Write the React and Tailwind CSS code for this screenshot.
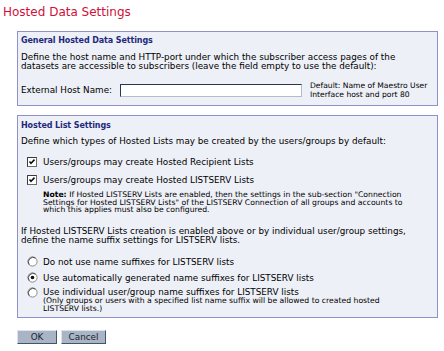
import React from 'react';

const Check = () => (
  <svg width="10" height="10" viewBox="0 0 10 10" className="shrink-0">
    <rect x="0.5" y="0.5" width="9" height="9" fill="#ffffff" stroke="#6b6b6b" />
    <path d="M0.5 9.5V0.5H9.5" fill="none" stroke="#3a3a3a" />
    <path d="M2.5 4.5L4 6.2L7.5 2.6" fill="none" stroke="#111111" strokeWidth="1.6" />
  </svg>
);

const Radio = ({ checked }) => (
  <svg width="11" height="11" viewBox="0 0 11 11" className="shrink-0">
    <circle cx="5.5" cy="5.5" r="4.6" fill="#ffffff" stroke="#8a8a8a" />
    <path d="M2.2 8.6A4.6 4.6 0 0 1 8.6 2.2" fill="none" stroke="#4a4a4a" />
    {checked && <circle cx="5.5" cy="5.5" r="1.8" fill="#111111" />}
  </svg>
);

const Button = ({ children, w }) => (
  <button
    type="button"
    className={`${w} h-[14px] bg-[#a9b5c6] border border-t-[#dde3ec] border-l-[#dde3ec] border-b-[#46546a] border-r-[#46546a] text-[8.8px] leading-[12px] text-[#1a1f2a]`}
  >
    {children}
  </button>
);

export default function App() {
  return (
    <div className="w-[444px] h-[351px] bg-white text-black overflow-hidden" style={{ fontFamily: '"DejaVu Sans", Verdana, sans-serif' }}>
      <h1 className="pl-[3px] pt-[5px] text-[12px] leading-[14px] text-[#d0103a]">Hosted Data Settings</h1>

      {/* General settings */}
      <div className="ml-[17px] mt-[12px] w-[421px] border border-[#9191c9] bg-[#eef0f7] px-[3px] pt-[4px] pb-[6px]">
        <h2 className="text-[8px] leading-[10px] font-bold tracking-[-0.1px] text-[#1f2a7c]">General Hosted Data Settings</h2>
        <p className="mt-[7px] text-[8.8px] leading-[9px]">
          Define the host name and HTTP-port under which the subscriber access pages of the<br />
          datasets are accessible to subscribers (leave the field empty to use the default):
        </p>
        <div className="mt-[10px] flex items-center">
          <span className="w-[99px] text-[8.8px] leading-[9px]">External Host Name:</span>
          <input
            type="text"
            className="w-[182px] h-[13px] bg-white border border-t-[#2a3550] border-l-[#2a3550] border-b-[#b4bccb] border-r-[#b4bccb] outline-none"
          />
          <span className="ml-[8px] text-[7.6px] leading-[9px]">
            Default: Name of Maestro User<br />Interface host and port 80
          </span>
        </div>
      </div>

      {/* List settings */}
      <div className="ml-[17px] mt-[9px] w-[421px] border border-[#9191c9] bg-[#eef0f7] px-[3px] pt-[5px] pb-[4px]">
        <h2 className="text-[8px] leading-[10px] font-bold tracking-[-0.1px] text-[#1f2a7c]">Hosted List Settings</h2>
        <p className="mt-[6px] text-[8.8px] leading-[9px]">
          Define which types of Hosted Lists may be created by the users/groups by default:
        </p>
        <div className="mt-[11px] flex items-center gap-[6px] pl-[6px] text-[8.8px] leading-[10px]">
          <Check />
          <span>Users/groups may create Hosted Recipient Lists</span>
        </div>
        <div className="mt-[8px] flex items-center gap-[6px] pl-[6px] text-[8.8px] leading-[10px]">
          <Check />
          <span>Users/groups may create Hosted LISTSERV Lists</span>
        </div>
        <p className="mt-[6px] pl-[22px] text-[7.7px] leading-[7.7px]">
          <b>Note:</b> If Hosted LISTSERV Lists are enabled, then the settings in the sub-section "Connection<br />
          Settings for Hosted LISTSERV Lists" of the LISTSERV Connection of all groups and accounts to<br />
          which this applies must also be configured.
        </p>
        <p className="mt-[13px] text-[8.8px] leading-[9px]">
          If Hosted LISTSERV Lists creation is enabled above or by individual user/group settings,<br />
          define the name suffix settings for LISTSERV lists.
        </p>
        <div className="mt-[11px] flex items-center gap-[5px] pl-[6px] text-[8.8px] leading-[10px]">
          <Radio />
          <span>Do not use name suffixes for LISTSERV lists</span>
        </div>
        <div className="mt-[5px] flex items-center gap-[5px] pl-[6px] text-[8.8px] leading-[10px]">
          <Radio checked />
          <span>Use automatically generated name suffixes for LISTSERV lists</span>
        </div>
        <div className="mt-[4px] flex items-start gap-[5px] pl-[6px]">
          <Radio />
          <div>
            <div className="text-[8.8px] leading-[10px]">Use individual user/group name suffixes for LISTSERV lists</div>
            <div className="text-[7.7px] leading-[8px]">
              (Only groups or users with a specified list name suffix will be allowed to created hosted<br />
              LISTSERV lists.)
            </div>
          </div>
        </div>
      </div>

      <div className="ml-[17px] mt-[12px] flex gap-[4px]">
        <Button w="w-[40px]">OK</Button>
        <Button w="w-[45px]">Cancel</Button>
      </div>
    </div>
  );
}
